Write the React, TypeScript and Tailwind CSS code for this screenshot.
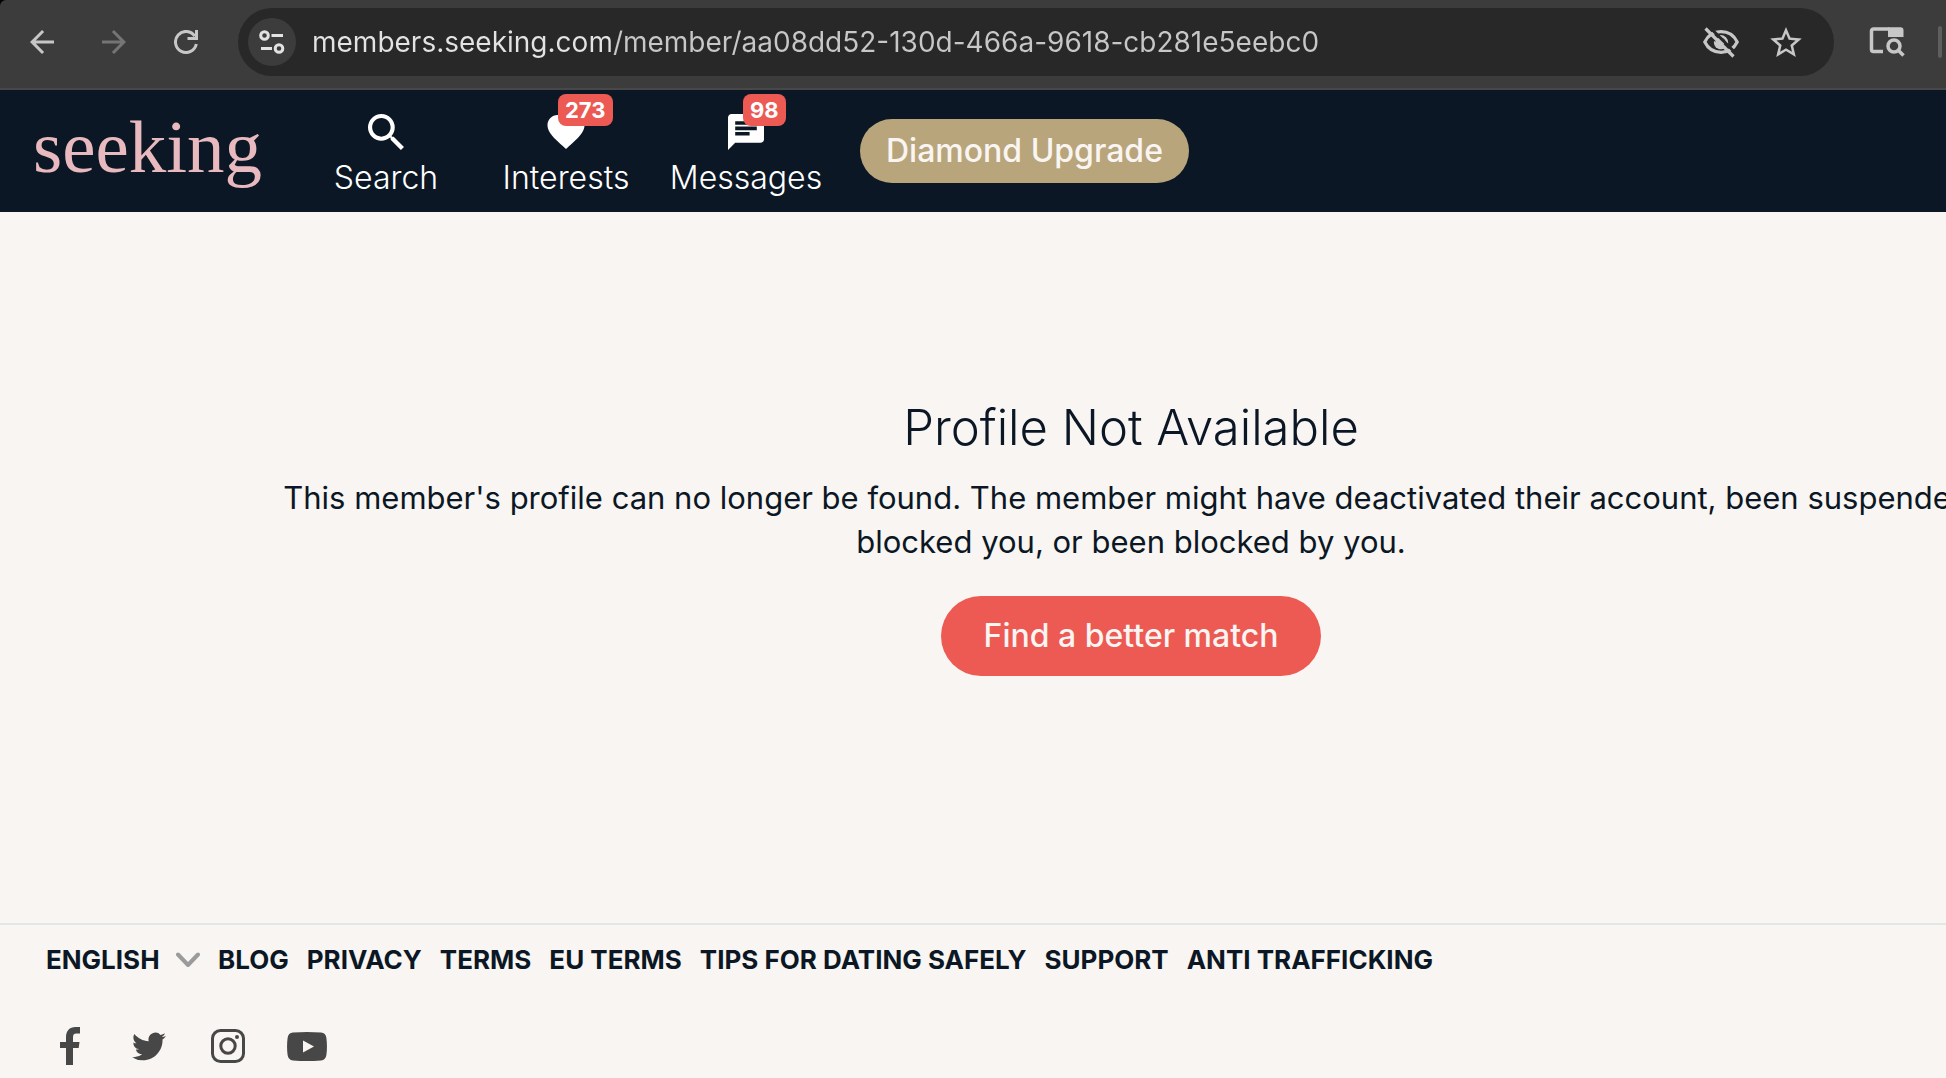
import React, { useState } from 'react'
import { MdArrowBack, MdArrowForward } from 'react-icons/md'

const ADDRESS = 'members.seeking.com/member/aa08dd52-130d-466a-9618-cb281e5eebc0'

const navItems = [
    { label: 'Search', icon: <SearchIcon /> },
    { label: 'Interests', icon: <HeartIcon />, count: 273, badge: 'left-[11px]' },
    { label: 'Messages', icon: <ChatIcon />, count: 98, badge: 'left-[15px]' }
]

const footerLinks = ['Blog', 'Privacy', 'Terms', 'EU Terms', 'Tips for dating safely', 'Support', 'Anti trafficking']

const socialLinks = [
    { label: 'Facebook', icon: <FacebookIcon /> },
    { label: 'Twitter', icon: <TwitterIcon /> },
    { label: 'Instagram', icon: <InstagramIcon /> },
    { label: 'YouTube', icon: <YoutubeIcon /> }
]

export default function App() {
    return (
        <div className="flex min-h-screen flex-col overflow-hidden bg-[#f9f5f2] font-['Inter','Liberation_Sans',sans-serif] text-[#0b1724]">
            <BrowserBar />
            <SiteHeader />
            <ProfileNotAvailable />
            <SiteFooter />
        </div>
    )
}

function BrowserBar() {
    const [address, setAddress] = useState(ADDRESS)

    return (
        <div className="bg-black">
            <div className="flex items-center rounded-tl-md border-b-2 border-[#484848] bg-[#3c3c3c] pt-2 pb-3 pl-[18px] text-[#c7c7c7]">
                <div className="flex gap-6">
                    <button aria-label="Back" className="flex size-12 items-center justify-center rounded-full">
                        <MdArrowBack className="size-9" />
                    </button>
                    <button aria-label="Forward" className="flex size-12 items-center justify-center rounded-full text-[#757575]">
                        <MdArrowForward className="size-9" />
                    </button>
                    <button aria-label="Reload" className="flex size-12 items-center justify-center rounded-full">
                        <ReloadIcon />
                    </button>
                </div>

                <div className="ml-7 flex h-[68px] flex-1 items-center rounded-full bg-[#282828] pr-8 pl-[10px]">
                    <button aria-label="View site information" className="flex size-12 items-center justify-center rounded-full bg-[#3c3c3c] text-[#e3e3e3]">
                        <TuneIcon />
                    </button>
                    <input
                        type="text"
                        aria-label="Address"
                        spellCheck={false}
                        value={address}
                        onChange={e => setAddress(e.target.value)}
                        className="ml-4 min-w-0 flex-1 bg-[linear-gradient(90deg,#e3e3e3_298px,#c7c7c7_298px)] bg-clip-text text-[28px] text-transparent outline-none"
                    />
                    <button aria-label="Third-party cookies blocked">
                        <EyeOffIcon />
                    </button>
                    <button aria-label="Bookmark this tab" className="ml-[31px]">
                        <StarIcon />
                    </button>
                </div>

                <button aria-label="Search this page in side panel" className="ml-[35px]">
                    <SidePanelIcon />
                </button>
                <span className="mr-1 ml-[33px] h-8 w-1 rounded-full bg-[#5e5e5e]" />
            </div>
        </div>
    )
}

function SiteHeader() {
    return (
        <header className="flex h-[122px] items-center bg-[#0b1724] pl-[33px]">
            <a href="#" className="w-[263px] pb-2 font-['Liberation_Serif',serif] text-[75px] leading-[88px] text-[#e8b9be]">seeking</a>
            <nav className="flex">
                {navItems.map(item => (
                    <a key={item.label} href="#" className="flex w-[180px] flex-col items-center gap-2 pt-[10px] text-white">
                        <span className="relative flex h-9 items-center">
                            {item.icon}
                            {item.count && (
                                <span className={cn(
                                    'absolute -top-5 rounded-lg bg-[#ec5a53] px-[7px] text-[22px] leading-8 font-bold',
                                    item.badge
                                )}>
                                    {item.count}
                                </span>
                            )}
                        </span>
                        <span className="text-[32px] leading-10 font-light">{item.label}</span>
                    </a>
                ))}
            </nav>
            <button className="ml-6 h-16 rounded-full bg-[#b9a57b] px-[26px] text-[32px] font-medium text-[#f9f5f2]">
                Diamond Upgrade
            </button>
        </header>
    )
}

function ProfileNotAvailable() {
    return (
        <main className="flex flex-col items-center pt-[186px] pb-[247px] pl-[316px] text-center">
            <h1 className="text-[49px] leading-[60px] font-light">Profile Not Available</h1>
            <p className="mt-[18px] text-[31px] leading-[44px] whitespace-nowrap">
                This member's profile can no longer be found. The member might have deactivated their account, been suspended,
                <br />
                blocked you, or been blocked by you.
            </p>
            <button className="mt-8 h-20 rounded-full bg-[#ec5a53] px-[43px] text-[32px] font-medium text-[#f9f5f2]">
                Find a better match
            </button>
        </main>
    )
}

function SiteFooter() {
    return (
        <footer className="border-t-2 border-[#e4e5e7] px-[46px] pt-[19px] pb-3">
            <div className="flex items-center gap-[18px] text-[26px] leading-8 font-bold whitespace-nowrap uppercase">
                <div className="relative flex items-center">
                    <select aria-label="Language" className="w-[154px] appearance-none bg-transparent uppercase outline-none">
                        <option>English</option>
                        <option>Español</option>
                        <option>Français</option>
                    </select>
                    <svg viewBox="0 0 24 16" className="pointer-events-none absolute right-0 h-4 w-6" fill="none" stroke="#9b9b9b" strokeWidth="4" strokeLinecap="round" strokeLinejoin="round">
                        <path d="M2 2.5l10 10.5l10-10.5" />
                    </svg>
                </div>
                {footerLinks.map(link => (
                    <a key={link} href="#">{link}</a>
                ))}
            </div>

            <div className="mt-[50px] flex gap-[39px] pl-1 text-[#474747]">
                {socialLinks.map(link => (
                    <a key={link.label} href="#" aria-label={link.label} className="flex size-10 items-center justify-center">
                        {link.icon}
                    </a>
                ))}
            </div>
        </footer>
    )
}

function ReloadIcon() {
    return (
        <svg viewBox="0 0 24 24" className="size-6" fill="none" stroke="currentColor" strokeWidth="3">
            <path d="M22.3 14A10.5 10.5 0 1 1 20.8 6.2" />
            <path d="M22.5 0v8.5h-9" />
        </svg>
    )
}

function TuneIcon() {
    return (
        <svg viewBox="0 0 26 24" className="h-6 w-[26px]" fill="none" stroke="currentColor" strokeWidth="3">
            <circle cx="5.5" cy="5.5" r="3.8" />
            <path d="M12.5 5.5H24M2 18.5h11" />
            <circle cx="20" cy="18.5" r="3.8" />
        </svg>
    )
}

function EyeOffIcon() {
    return (
        <svg viewBox="0 0 36 32" className="h-8 w-9" fill="none" stroke="currentColor" strokeWidth="3.2">
            <path d="M1.8 16C5 9.5 11 5.7 18 5.7S31 9.5 34.2 16C31 22.5 25 26.3 18 26.3S5 22.5 1.8 16z" />
            <path d="M11 15a7 7 0 0 0 12 6z" fill="currentColor" stroke="none" />
            <circle cx="17" cy="16" r="4.5" fill="currentColor" stroke="none" />
            <path d="M17 10.3a6.5 6.5 0 0 1 7 7" strokeWidth="2.5" />
            <path d="M3.5 -2l31 31" stroke="#282828" strokeWidth="3" />
            <path d="M2.5 2.5l28 28" />
        </svg>
    )
}

function StarIcon() {
    return (
        <svg viewBox="2 2 20 19" className="h-[30px] w-8" fill="currentColor">
            <path d="M22 9.24l-7.19-.62L12 2 9.19 8.63 2 9.24l5.46 4.73L5.82 21 12 17.27 18.18 21l-1.63-7.03L22 9.24zM12 15.4l-3.76 2.27 1-4.28-3.32-2.88 4.38-.38L12 6.1l1.71 4.04 4.38.38-3.32 2.88 1 4.28L12 15.4z" />
        </svg>
    )
}

function SidePanelIcon() {
    return (
        <svg viewBox="0 0 36 32" className="h-8 w-9" fill="none" stroke="currentColor" strokeWidth="3.5">
            <path d="M14 25.5H4.5a2 2 0 0 1-2-2V5a2 2 0 0 1 2-2H20" />
            <path d="M19 1.2h12.5a3 3 0 0 1 3 3V11H19z" fill="currentColor" stroke="none" />
            <circle cx="25" cy="20" r="6" />
            <path d="M29 24l5.5 5.5" />
        </svg>
    )
}

function SearchIcon() {
    return (
        <svg viewBox="3 3 17.5 17.5" className="size-9" fill="currentColor">
            <path d="M15.5 14h-.79l-.28-.27A6.471 6.471 0 0 0 16 9.5 6.5 6.5 0 1 0 9.5 16c1.61 0 3.09-.59 4.23-1.57l.27.28v.79l5 4.99L20.49 19l-4.99-5zm-6 0C7.01 14 5 11.99 5 9.5S7.01 5 9.5 5 14 7.01 14 9.5 11.99 14 9.5 14z" />
        </svg>
    )
}

function HeartIcon() {
    return (
        <svg viewBox="2 3 20 18.35" className="h-[34px] w-[38px]" fill="currentColor">
            <path d="M12 21.35l-1.45-1.32C5.4 15.36 2 12.28 2 8.5 2 5.42 4.42 3 7.5 3c1.74 0 3.41.81 4.5 2.09C13.09 3.81 14.76 3 16.5 3 19.58 3 22 5.42 22 8.5c0 3.78-3.4 6.86-8.55 11.54L12 21.35z" />
        </svg>
    )
}

function ChatIcon() {
    return (
        <svg viewBox="2 2 20 20" className="size-9" fill="currentColor">
            <path d="M20 2H4c-1.1 0-1.99.9-1.99 2L2 22l4-4h14c1.1 0 2-.9 2-2V4c0-1.1-.9-2-2-2zM6 9h12v2H6V9zm8 5H6v-2h8v2zm4-6H6V6h12v2z" />
        </svg>
    )
}

function FacebookIcon() {
    return (
        <svg viewBox="0 0 20 38" className="h-[38px] w-5" fill="currentColor">
            <path d="M6 38V21H0v-6h6v-4.5C6 3.7 9.5 0 15.5 0H20v6.5h-3.5C13.7 6.5 13 8 13 10.5V15h6.5l-.8 6H13v17z" />
        </svg>
    )
}

function TwitterIcon() {
    return (
        <svg viewBox="0 2 24 20" className="h-[29px] w-[34px]" fill="currentColor">
            <path d="M23.95 4.57a10 10 0 0 1-2.82.78 4.96 4.96 0 0 0 2.16-2.72c-.95.55-2 .95-3.13 1.18a4.92 4.92 0 0 0-8.38 4.48C7.69 8.1 4.07 6.13 1.64 3.16a4.82 4.82 0 0 0-.67 2.48c0 1.71.87 3.21 2.19 4.1a4.9 4.9 0 0 1-2.23-.62v.06a4.92 4.92 0 0 0 3.95 4.83 5 5 0 0 1-2.21.08 4.94 4.94 0 0 0 4.6 3.42A9.87 9.87 0 0 1 0 19.54a13.99 13.99 0 0 0 7.55 2.21c9.05 0 14-7.5 14-13.98 0-.21 0-.42-.02-.63a9.94 9.94 0 0 0 2.46-2.55z" />
        </svg>
    )
}

function InstagramIcon() {
    return (
        <svg viewBox="0 0 34 34" className="size-[34px]" fill="none" stroke="currentColor" strokeWidth="3">
            <rect x="1.5" y="1.5" width="31" height="31" rx="8" />
            <circle cx="17" cy="17" r="7.2" />
            <circle cx="26" cy="8" r="2" fill="currentColor" stroke="none" />
        </svg>
    )
}

function YoutubeIcon() {
    return (
        <svg viewBox="0 0 40 29" className="h-[29px] w-10" fill="currentColor">
            <path fillRule="evenodd" d="M6 .6Q20-.5 34 .6Q38.8 1 39.4 6Q40.5 14.5 39.4 23Q38.8 28 34 28.4Q20 29.5 6 28.4Q1.2 28 .6 23Q-.5 14.5 .6 6Q1.2 1 6 .6zM16 8.5v12l11-6z" />
        </svg>
    )
}

function cn(...inputs: any[]) {
    return inputs.filter(Boolean).join(' ')
}
